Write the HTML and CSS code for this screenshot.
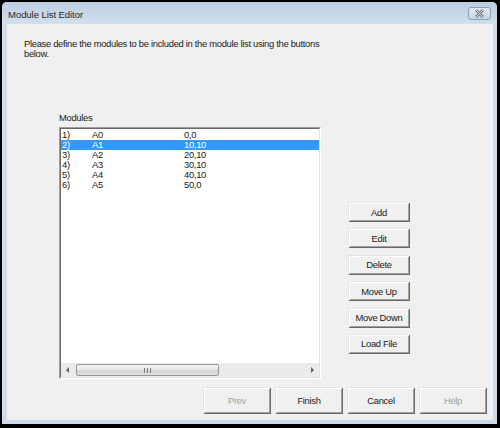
FILE: index.html
```html
<!DOCTYPE html>
<html>
<head>
<meta charset="utf-8">
<link rel="stylesheet" href="styles.css">
</head>
<body>
<div class="window">
  <div class="titlebar">
    <span class="title">Module List Editor</span>
    <button class="close" aria-label="Close">
      <svg width="23" height="13" viewBox="0 0 23 13">
        <path d="M8 3 L15 10 M15 3 L8 10" stroke="#6f7d90" stroke-width="2.8" fill="none"/>
        <path d="M8 3 L15 10 M15 3 L8 10" stroke="#d3dbe5" stroke-width="1" fill="none"/>
      </svg>
    </button>
  </div>
  <div class="frame">
    <div class="content">
      <p class="intro">Please define the modules to be included in the module list using the buttons below.</p>
      <div class="middle">
        <div class="listcol">
          <div class="label">Modules</div>
          <div class="listbox">
            <div class="listinner">
              <div class="rows">
                <div class="row"><span>1)</span><span>A0</span><span>0,0</span></div>
                <div class="row sel"><span>2)</span><span>A1</span><span>10,10</span></div>
                <div class="row"><span>3)</span><span>A2</span><span>20,10</span></div>
                <div class="row"><span>4)</span><span>A3</span><span>30,10</span></div>
                <div class="row"><span>5)</span><span>A4</span><span>40,10</span></div>
                <div class="row"><span>6)</span><span>A5</span><span>50,0</span></div>
              </div>
              <div class="hscroll">
                <div class="arrow">
                  <svg width="4" height="6" viewBox="0 0 4 6"><path d="M3 0 L0 3 L3 6 Z" fill="#606060"/></svg>
                </div>
                <div class="thumb">
                  <svg width="7" height="5" viewBox="0 0 7 5"><path d="M0.5 0 V5 M3.5 0 V5 M6.5 0 V5" stroke="#7a7a7a" stroke-width="1"/></svg>
                </div>
                <div class="track"></div>
                <div class="arrow">
                  <svg width="4" height="6" viewBox="0 0 4 6"><path d="M1 0 L4 3 L1 6 Z" fill="#606060"/></svg>
                </div>
              </div>
            </div>
          </div>
        </div>
        <div class="side">
          <button class="btn">Add</button>
          <button class="btn">Edit</button>
          <button class="btn">Delete</button>
          <button class="btn">Move Up</button>
          <button class="btn">Move Down</button>
          <button class="btn">Load File</button>
        </div>
      </div>
      <div class="footer">
        <button class="btn disabled">Prev</button>
        <button class="btn">Finish</button>
        <button class="btn">Cancel</button>
        <button class="btn disabled">Help</button>
      </div>
    </div>
  </div>
</div>
</body>
</html>
```
FILE: styles.css
```css
html, body {
  margin: 0;
  padding: 0;
}
body {
  width: 500px;
  height: 428px;
  overflow: hidden;
  background: #000;
  font-family: "Liberation Sans", Arial, sans-serif;
  font-size: 9.4px;
  letter-spacing: -0.3px;
  color: #1a1a1a;
}
.window {
  margin: 2px 0 0 2px;
  width: 495px;
  height: 422px;
  background: #cfdbe8;
  border-radius: 5px 5px 0 0;
  display: flex;
  flex-direction: column;
}
.titlebar {
  height: 22px;
  flex: none;
  display: flex;
  align-items: center;
  justify-content: space-between;
  padding: 0 6px;
  border-radius: 5px 5px 0 0;
  background: linear-gradient(#bccee3, #d2dfed);
}
.title {
  font-size: 9.6px;
  letter-spacing: -0.1px;
  color: #2a2a2a;
  margin-top: 2px;
}
.close {
  width: 23px;
  height: 13px;
  padding: 0;
  margin-top: 1px;
  border: 1px solid #8e9db1;
  border-radius: 3px;
  background: linear-gradient(#e3eaf3, #c9d5e4);
  display: flex;
  align-items: center;
  justify-content: center;
}
.close svg {
  display: block;
  margin: -1px;
}
.frame {
  flex: 1;
  padding: 0 4px 4px 5px;
}
.content {
  height: 100%;
  box-sizing: border-box;
  background: #f0f0f0;
  padding: 15px 6px 0 17px;
  display: flex;
  flex-direction: column;
}
.intro {
  margin: 0;
  width: 310px;
  line-height: 10px;
}
.middle {
  display: flex;
  margin: 53.5px 0 0 35px;
}
.label {
  line-height: 10px;
  margin-bottom: 4.5px;
}
.listbox {
  width: 262px;
  height: 252px;
  box-sizing: border-box;
  border: 1px solid;
  border-color: #a0a0a0 #ffffff #ffffff #a0a0a0;
}
.listinner {
  height: 100%;
  box-sizing: border-box;
  border: 1px solid;
  border-color: #696969 #e3e3e3 #e3e3e3 #696969;
  background: #fff;
  display: flex;
  flex-direction: column;
}
.rows {
  flex: 1;
  padding-top: 1px;
}
.row {
  display: grid;
  grid-template-columns: 30px 92px 1fr;
  height: 10px;
  line-height: 10px;
  padding-left: 1px;
}
.row.sel {
  background: #3399ff;
  color: #fff;
}
.hscroll {
  height: 14px;
  display: flex;
  align-items: center;
  background: #ebebeb;
}
.arrow {
  width: 14px;
  height: 14px;
  display: flex;
  align-items: center;
  justify-content: center;
}
.thumb {
  width: 143px;
  height: 12px;
  margin-left: 1px;
  box-sizing: border-box;
  border: 1px solid #979797;
  border-radius: 2px;
  background: linear-gradient(#f5f5f5, #e6e6e6 50%, #d6d6d6 51%, #dedede);
  display: flex;
  align-items: center;
  justify-content: center;
}
.track {
  flex: 1;
}
.side {
  display: flex;
  flex-direction: column;
  gap: 6.4px;
  margin-left: 27px;
  padding-top: 89.5px;
}
.btn {
  box-sizing: border-box;
  padding: 0;
  border: none;
  background: #f0f0f0;
  font: inherit;
  letter-spacing: inherit;
  color: #1a1a1a;
  box-shadow: inset 1px 1px #e3e3e3, inset -1px -1px #696969, inset 2px 2px #ffffff, inset -2px -2px #a0a0a0;
}
.side .btn {
  width: 62px;
  height: 20px;
}
.footer {
  display: flex;
  justify-content: flex-end;
  gap: 4px;
  margin-top: 8px;
}
.footer .btn {
  width: 68px;
  height: 27px;
}
.btn.disabled {
  color: #a0a0a0;
}
```
